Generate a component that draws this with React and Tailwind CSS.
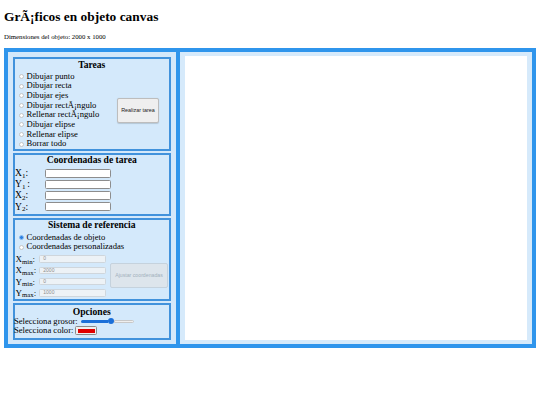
import React from 'react';

const serif = { fontFamily: '"Liberation Serif", "Times New Roman", serif' };

const Radio = ({ checked = false }) =>
    checked ? (
        <span className="ml-[4px] mr-[3px] inline-block h-[5px] w-[5px] shrink-0 rounded-full border border-[#8fbff0] bg-[#2a7fe2]" />
    ) : (
        <span className="ml-[4px] mr-[3px] inline-block h-[5px] w-[5px] shrink-0 rounded-full border border-[#c4c4c4] bg-white" />
    );

const Box = ({ className = '', children }) => (
    <div className={`border-2 border-[#4192dc] bg-[#d4e9fb] ${className}`}>{children}</div>
);

const Title = ({ children, className = '' }) => (
    <div className={`text-center text-[9.6px] font-bold leading-[10px] text-black ${className}`}>{children}</div>
);

const tareas = [
    'Dibujar punto',
    'Dibujar recta',
    'Dibujar ejes',
    'Dibujar rectÃ¡ngulo',
    'Rellenar rectÃ¡ngulo',
    'Dibujar elipse',
    'Rellenar elipse',
    'Borrar todo',
];

const coords = [
    ['X', '1'],
    ['Y', '1 '],
    ['X', '2'],
    ['Y', '2'],
];

const limites = [
    ['X', 'min', '0'],
    ['X', 'max', '2000'],
    ['Y', 'min', '0'],
    ['Y', 'max', '1000'],
];

export default function App() {
    return (
        <div className="min-h-[405px] bg-white px-[4px] pt-[10px] text-black" style={serif}>
            <h1 className="text-[13.4px] font-bold leading-[14px]">GrÃ¡ficos en objeto canvas</h1>
            <p className="mt-[9px] text-[6.8px] leading-[8px]">Dimensiones del objeto: 2000 x 1000</p>

            <div className="mt-[7px] flex h-[300px] border-4 border-[#2f95ec]">
                {/* panel de controles */}
                <div className="flex w-[172px] flex-col gap-[2px] border-r-4 border-[#2f95ec] bg-[#d4e8fa] pl-[4.5px] pr-[5px] pt-[5px]">
                    <Box className="h-[94px]">
                        <Title className="leading-[11px]">Tareas</Title>
                        <div className="mt-[1.5px] flex items-center">
                            <div className="flex flex-col">
                                {tareas.map((t) => (
                                    <label key={t} className="flex h-[9.7px] items-center text-[8.6px] leading-[9.7px]">
                                        <Radio />
                                        {t}
                                    </label>
                                ))}
                            </div>
                            <button
                                className="ml-auto mr-[10px] h-[25px] w-[42px] rounded-[2px] border border-[#bdbdbd] bg-[#efefef] text-[5.4px] text-[#222] shadow-[0_0.5px_1px_rgba(0,0,0,0.15)]"
                                style={{ fontFamily: '"Liberation Sans", Arial, sans-serif' }}
                            >
                                Realizar tarea
                            </button>
                        </div>
                    </Box>

                    <Box className="h-[63px]">
                        <Title>Coordenadas de tarea</Title>
                        <div className="mt-[2.7px] flex flex-col">
                            {coords.map(([l, s], i) => (
                                <div key={i} className="flex h-[11.1px] items-center">
                                    <span className="w-[30.5px] pl-[0.5px] text-[9.5px] leading-[10px]">
                                        {l}
                                        <sub>{s}</sub>:
                                    </span>
                                    <span className="h-[8.7px] w-[66px] rounded-[1.5px] border border-[#8d8d8d] bg-white" />
                                </div>
                            ))}
                        </div>
                    </Box>

                    <Box className="h-[83px]">
                        <Title>Sistema de referencia</Title>
                        <div className="mt-[2.8px] flex flex-col text-[8.6px]">
                            <label className="flex h-[9.6px] items-center leading-[9.6px]">
                                <Radio checked />
                                Coordenadas de objeto
                            </label>
                            <label className="flex h-[9.6px] items-center leading-[9.6px]">
                                <Radio />
                                Coordenadas personalizadas
                            </label>
                        </div>
                        <div className="mt-[1.6px] flex items-center">
                            <div className="flex flex-col">
                                {limites.map(([l, s, v]) => (
                                    <div key={l + s} className="flex h-[11.2px] items-center">
                                        <span className="w-[24.8px] pl-[1px] text-[9px] leading-[10px]">
                                            {l}
                                            <sub>{s}</sub>:
                                        </span>
                                        <span
                                            className="flex h-[7.7px] w-[66.7px] items-center rounded-[1.5px] border border-[#cfd6dc] bg-[#edf2f6] pl-[3px] text-[5px] text-[#8e8e8e]"
                                            style={{ fontFamily: '"Liberation Sans", Arial, sans-serif' }}
                                        >
                                            {v}
                                        </span>
                                    </div>
                                ))}
                            </div>
                            <button
                                disabled
                                className="ml-[4px] h-[25px] w-[58px] rounded-[2px] border border-[#c5d2dd] bg-[#dde5ec] text-[5.2px] text-[#a3b1bd]"
                                style={{ fontFamily: '"Liberation Sans", Arial, sans-serif' }}
                            >
                                Ajustar coordenadas
                            </button>
                        </div>
                    </Box>

                    <Box className="h-[37px]">
                        <Title className="pt-[1.5px]">Opciones</Title>
                        <div className="flex h-[9.5px] items-center text-[8.6px] leading-[9.5px]">
                            <span className="-ml-[0.5px]">Selecciona grosor:</span>
                            <div className="ml-[3px] flex w-[53px] items-center">
                                <span className="h-[2.5px] w-[27px] rounded-l-full bg-[#1b6fd8]" />
                                <span className="h-[6px] w-[6px] shrink-0 rounded-full bg-[#1b6fd8]" />
                                <span className="h-[2.5px] flex-1 rounded-r-full border border-[#c8c8c8] bg-[#efefef]" />
                            </div>
                        </div>
                        <div className="flex h-[9.5px] items-center text-[8.6px] leading-[9.5px]">
                            <span className="-ml-[0.5px]">Selecciona color:</span>
                            <span className="ml-[2px] flex h-[8.7px] w-[21.7px] items-center justify-center rounded-[1.5px] border border-[#8a8a8a] bg-[#efefef] p-[1.5px]">
                                <span className="h-full w-full bg-[#e00000]" />
                            </span>
                        </div>
                    </Box>
                </div>

                {/* lienzo */}
                <div className="flex-1 bg-[#d6eafb] px-[5px] py-[4px]">
                    <div className="h-full w-full bg-white" />
                </div>
            </div>
        </div>
    );
}
